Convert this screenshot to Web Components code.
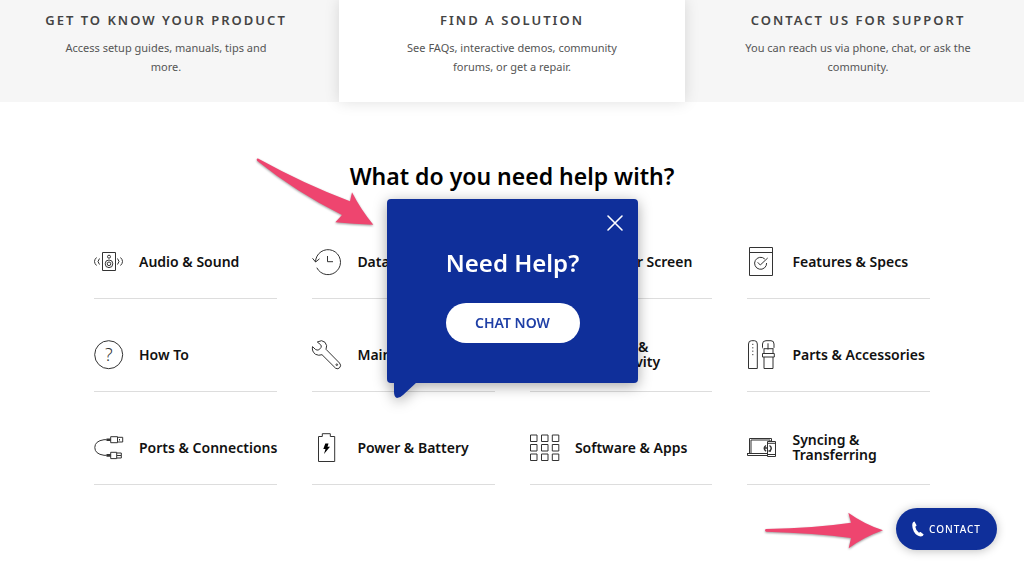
<!DOCTYPE html>
<html lang="en">
<head>
<meta charset="utf-8">
<meta name="viewport" content="width=device-width, initial-scale=1">
<title>Support</title>
<style>
  body { margin: 0; background: #fff; color: #000; font-family: "Noto Sans", "Open Sans", sans-serif; }
</style>
</head>
<body>
<support-page></support-page>

<template id="support-page">
  <style>
    :host { display: block; position: relative; min-height: 100vh; overflow: hidden; }
    nav { display: grid; grid-template-columns: repeat(3, 1fr); margin: 0 -7px; background: #f6f6f6; }
    h2 { margin: 56px 0 32px; text-align: center; font-size: 23px; line-height: 36px; font-weight: 600; }
    .topics { display: grid; grid-template-columns: repeat(4, 1fr); gap: 20px 35px; margin: 0 94px; }
    chat-prompt { position: absolute; top: 199px; left: 50%; margin-left: -125px; }
    contact-button { position: fixed; right: 27px; bottom: 18px; }
    .pointer { position: absolute; overflow: visible; fill: #ee456f; filter: drop-shadow(0 1px 1px rgba(0,0,0,.4)); }
    .to-chat { left: 50%; margin-left: -256px; top: 158px; }
    .to-contact { position: fixed; right: 141px; bottom: 19px; }
  </style>
  <nav aria-label="Support options">
    <support-tile><span slot="title">Get to know your product</span>Access setup guides, manuals, tips and more.</support-tile>
    <support-tile active><span slot="title">Find a solution</span>See FAQs, interactive demos, community forums, or get a repair.</support-tile>
    <support-tile><span slot="title">Contact us for support</span>You can reach us via phone, chat, or ask the community.</support-tile>
  </nav>
  <main>
    <h2>What do you need help with?</h2>
    <div class="topics">
      <help-topic icon="audio">Audio &amp; Sound</help-topic>
      <help-topic icon="history">Data Backup</help-topic>
      <help-topic icon="display">Display or Screen</help-topic>
      <help-topic icon="specs">Features &amp; Specs</help-topic>
      <help-topic icon="question">How To</help-topic>
      <help-topic icon="wrench">Maintenance</help-topic>
      <help-topic icon="network">Network &amp;
Connectivity</help-topic>
      <help-topic icon="parts">Parts &amp; Accessories</help-topic>
      <help-topic icon="ports">Ports &amp; Connections</help-topic>
      <help-topic icon="battery">Power &amp; Battery</help-topic>
      <help-topic icon="apps">Software &amp; Apps</help-topic>
      <help-topic icon="sync">Syncing &amp;
Transferring</help-topic>
    </div>
  </main>
  <chat-prompt>Need Help?</chat-prompt>
  <svg class="pointer to-chat" width="118" height="68" viewBox="0 0 118 68" aria-hidden="true"><path d="M2 .6Q50 27 94 43.300L96 34.300Q105 52 117.300 66.700Q98 66 79.300 64.300L86 57Q40 34 1 2.700Q0 .2 2 .6Z"/></svg>
  <svg class="pointer to-contact" width="118" height="37" viewBox="0 0 118 37" aria-hidden="true"><path d="M1 17Q50 16 86 10.700L83.300.7Q99 12 118 18.300Q99 25 83.700 36.300L86 26Q50 21 1 19.700Q-1 18 1 17Z"/></svg>
  <contact-button>Contact</contact-button>
</template>

<template id="support-tile">
  <style>
    :host { display: block; }
    a { display: block; box-sizing: border-box; height: 100%; padding: 8px 60px 26px; text-align: center; color: #555; text-decoration: none; }
    :host([active]) a { position: relative; background: #fff; box-shadow: 0 0 14px rgba(0,0,0,.13); }
    h3 { margin: 0 -60px 6px; font-size: 13px; line-height: 24px; font-weight: 600; letter-spacing: 2px; text-transform: uppercase; color: #444; }
    p { margin: 0; font-size: 11px; line-height: 19px; }
  </style>
  <a href="#"><h3><slot name="title"></slot></h3><p><slot></slot></p></a>
</template>

<template id="help-topic">
  <style>
    :host { display: block; }
    a { display: flex; align-items: center; gap: 15px; height: 72px; border-bottom: 1px solid #ddd; color: #111; text-decoration: none; font-size: 14px; line-height: 15px; font-weight: 600; white-space: pre; }
    span { padding-bottom: 2px; }
  </style>
  <a href="#"><topic-icon></topic-icon><span><slot></slot></span></a>
</template>

<template id="chat-prompt">
  <style>
    :host { display: block; width: 251px; filter: drop-shadow(0 3px 7px rgba(0,0,0,.35)); color: #fff; }
    section { position: relative; display: flex; flex-direction: column; align-items: center; padding: 46px 0 40px; border-radius: 4px; background: #0f2f9a; }
    h2 { margin: 0 0 22px; font-size: 24px; line-height: 36px; font-weight: 600; }
    button { border: 0; padding: 0; cursor: pointer; font: inherit; }
    .chat { width: 134px; height: 40px; padding-bottom: 2px; border-radius: 20px; background: #fff; color: #1f3fa6; font-size: 14px; font-weight: 600; }
    .close { position: absolute; top: 16px; right: 15px; width: 16px; height: 16px; background: none; color: #fff; }
    svg { display: block; overflow: visible; }
    .tail { position: absolute; left: 7px; top: 100%; fill: #0f2f9a; }
  </style>
  <section role="dialog" aria-label="Chat">
    <button class="close" aria-label="Close"><svg width="16" height="16" viewBox="0 0 16 16" fill="none" stroke="currentColor" stroke-width="1.600" stroke-linecap="round"><path d="M1 1L15 15M15 1L1 15"/></svg></button>
    <h2><slot></slot></h2>
    <button class="chat">CHAT NOW</button>
    <svg class="tail" width="23" height="15" viewBox="0 0 23 15" aria-hidden="true"><path d="M0-1H23L9 12Q6 15 3 15Q0 14 0 9Z"/></svg>
  </section>
</template>

<template id="contact-button">
  <style>
    :host { display: block; }
    button { display: flex; align-items: center; gap: 5px; height: 42px; margin: 0; padding: 0 16px; border: 0; border-radius: 21px; background: #0f2f9a; color: #fff; font: 500 10px/16px "Noto Sans", sans-serif; letter-spacing: 1px; text-transform: uppercase; box-shadow: 0 1px 10px rgba(0,0,0,.25); cursor: pointer; }
  </style>
  <button><svg width="12" height="16" viewBox="0 0 12 16" fill="currentColor" aria-hidden="true"><path d="M2.500.5L4.500 4.300Q4.700 5 3.300 5.700Q3.800 9.500 7 11.800Q8 10.800 8.600 11.100L11.700 13.400Q11 15.500 8.800 15.500Q4.500 15.200 1.800 10.500Q-.5 5.500.6 2Q1.200.4 2.500.5Z"/></svg><span><slot></slot></span></button>
</template>

<script>
  const icons = {
    audio: '<path d="M8.500 5.500H21.500V23.500H8.500ZM2.500 10.500Q-1.500 14.500 2.500 18.500M5.500 11.500Q2.500 14.500 5.500 17.500M26.500 10.500Q30.500 14.500 26.500 18.500M23.500 11.500Q26.500 14.500 23.500 17.500"/><circle cx="15" cy="9.700" r="1.500"/><circle cx="15" cy="16.800" r="3.800"/><circle cx="15" cy="16.800" r="1.800"/>',
    history: '<path d="M3.500 15A12.500 12.500 0 1 1 4.800 20.700M.5 11.300L3.600 15L7.500 11.800M15.500 9V14.700H21"/>',
    display: '<path d="M1.500 4.500H28.500V21.500H1.500ZM10 26.500H20M15 21.500V26.500"/>',
    specs: '<path d="M2.500.5H25.500V28.500H2.500ZM2.500 5.500H25.500M10.700 15.300L13.300 18L20.700 11M17.800 12A6 6 0 1 0 19.600 16"/>',
    question: '<circle cx="14.700" cy="14.700" r="14"/><text x="14.700" y="21" text-anchor="middle">?</text>',
    wrench: '<path d="M5.300 2Q10-.8 13 2.300Q15.800 5.500 14 9.300L27.500 23Q29.500 25.300 28 27.300Q26 29.800 23.700 28.300L10 14.700Q6.700 16 3.500 14.300Q-.4 11.500.5 6.600L3.300 9.300Q5 10.600 6.800 9.900L9 7.500Q9.800 5.900 8.600 4.700Z"/><circle cx="24.800" cy="24.700" r=".8"/>',
    network: '<circle cx="14.700" cy="14.700" r="13"/><path d="M2 14.700H28M14.700 2Q4 14.700 14.700 28Q25 14.700 14.700 2"/>',
    parts: '<path d="M1.500 28.500V4Q1.500.7 4.500.7H7.500Q10.300.7 10.300 4V28.500ZM16 8.500L15.500 7.500V4Q15.500.7 19 .7H24Q27 .7 27 4V7.500L26.300 8.500M21 3.300V9.500M17 13.500V8.700H26V13.500M15.500 13.500H27.300V17H15.500ZM17 17V28.500H26V17"/><path stroke-dasharray="1.200 2.200" d="M5.800 3.800V16"/>',
    ports: '<path d="M12.700 6.700H10Q.8 8 .8 14.500Q.8 21 10 22.300H12.700M16.700 3.700H23.500V9.700H16.700ZM23.500 4.300H28.700V9H23.500M16.700 19.300H22.700V25.600H16.700ZM22.700 20H27.300V25H22.700M23 22.500H27M25.500 6V7.500"/><path stroke-width="2.600" d="M12.500 6.700H16.700M12.500 22.400H16.700"/>',
    battery: '<path d="M6.500 3.500H10.300V.7H18.300V3.500H22.700V28.500H6.500Z"/><path fill="currentColor" stroke="none" d="M13.300 10.500H16.500L15.500 13.700H18L12 21L13.500 16H11.300Z"/>',
    apps: '<path d="M.5 2H7V8.500H.5ZM11.500 2H18V8.500H11.500ZM22.300 2H28.800V8.500H22.300ZM.5 11.500H7V18H.5ZM11.500 11.500H18V18H11.500ZM22.300 11.500H28.800V18H22.300ZM.5 21H7V27.500H.5ZM11.500 21H18V27.500H11.500ZM22.300 21H28.800V27.500H22.300Z"/>',
    sync: '<path d="M2.500 20V5.500H24.500V8.500M4 20V7H23V8.500M.5 20.500H20.500M.5 22.500H20.500M.5 20V22.500M20.500 8.500H28.500V23.500H20.500ZM20.500 10.300H28.500M20.500 21.500H28.500"/><path stroke-width="1.500" d="M19 12.500Q15.500 15 19 18.300M22.500 12.500Q26 15 22.500 18.300M17.500 15H20M21.500 18H24"/>'
  };

  class BaseElement extends HTMLElement {
    constructor() {
      super();
      this.attachShadow({ mode: 'open' })
        .append(document.getElementById(this.localName).content.cloneNode(true));
    }
  }

  class TopicIcon extends HTMLElement {
    constructor() {
      super();
      this.attachShadow({ mode: 'open' });
    }
    set name(value) {
      this.shadowRoot.innerHTML = `<style>
        :host { display: block; flex: none; width: 30px; height: 30px; color: #000; }
        svg { display: block; overflow: visible; fill: none; stroke: #333; stroke-width: 1; }
        text { fill: #333; stroke: none; font: 300 18px "Noto Sans", sans-serif; }
      </style><svg width="30" height="30" viewBox="0 0 30 30" aria-hidden="true">${icons[value] || ''}</svg>`;
    }
  }

  class HelpTopic extends BaseElement {
    connectedCallback() {
      this.shadowRoot.querySelector('topic-icon').name = this.getAttribute('icon');
    }
  }

  customElements.define('topic-icon', TopicIcon);
  customElements.define('help-topic', HelpTopic);
  customElements.define('support-tile', class extends BaseElement {});
  customElements.define('chat-prompt', class extends BaseElement {});
  customElements.define('contact-button', class extends BaseElement {});
  customElements.define('support-page', class extends BaseElement {});
</script>
</body>
</html>
